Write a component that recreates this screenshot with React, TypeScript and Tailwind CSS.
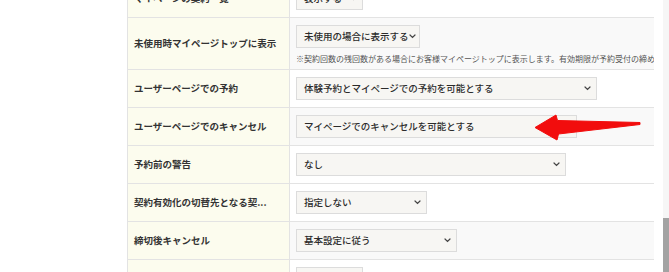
import React from "react";

type Row = {
  label: string;
  value: string;
  width: number;
  shade: boolean;
  chevron?: boolean;
  note?: string;
};

const rows: Row[] = [
  { label: "マイページの契約一覧", value: "表示する", width: 67, shade: false },
  {
    label: "未使用時マイページトップに表示",
    value: "未使用の場合に表示する",
    width: 124,
    shade: true,
    note: "※契約回数の残回数がある場合にお客様マイページトップに表示します。有効期限が予約受付の締め切りを過ぎた場合は表示しません。",
  },
  { label: "ユーザーページでの予約", value: "体験予約とマイページでの予約を可能とする", width: 301, shade: false },
  { label: "ユーザーページでのキャンセル", value: "マイページでのキャンセルを可能とする", width: 281, shade: true, chevron: false },
  { label: "予約前の警告", value: "なし", width: 270, shade: false },
  { label: "契約有効化の切替先となる契...", value: "指定しない", width: 131, shade: false },
  { label: "締切後キャンセル", value: "基本設定に従う", width: 161, shade: true },
  { label: "", value: "", width: 67, shade: false },
];

function Chevron() {
  return (
    <svg width="7" height="5" viewBox="0 0 7 5" className="shrink-0">
      <path d="M1 1l2.5 2.5L6 1" fill="none" stroke="#444" strokeWidth="1.2" strokeLinecap="round" />
    </svg>
  );
}

function Select({ value, width, chevron = true }: { value: string; width: number; chevron?: boolean }) {
  return (
    <div
      className="h-[23px] flex items-center justify-between pl-[7px] pr-[5px] bg-[#f7f6f3] border border-[#dcdcdc] text-[9.5px] font-medium text-[#2b2b2b] whitespace-nowrap"
      style={{ width }}
    >
      <span>{value}</span>
      {chevron && <Chevron />}
    </div>
  );
}

export default function App() {
  return (
    <div
      className="relative w-[669px] h-[272px] overflow-hidden bg-white flex"
      style={{ fontFamily: '"Noto Sans CJK JP", "Noto Sans", sans-serif' }}
    >
      <div className="w-[127px] shrink-0" />

      {/* Settings table */}
      <div className="w-[527px] shrink-0 -mt-[20px] border-l border-[#e3e3e3]">
        {rows.map((row, i) => (
          <div key={i} className="flex border-b border-[#e3e3e3]">
            <div className="w-[162px] shrink-0 bg-[#fcfcee] border-r border-[#e3e3e3] flex items-center pl-[6px] text-[9.5px] font-bold text-[#333] whitespace-nowrap">
              {row.label}
            </div>
            <div
              className={`flex-1 min-w-0 pl-[6px] ${row.note ? "pt-[7px] pb-[5px] h-[51px]" : "h-[37px] flex items-center"} ${row.shade ? "bg-[#f9f9f9]" : "bg-white"}`}
            >
              <Select value={row.value} width={row.width} chevron={row.chevron} />
              {row.note && (
                <p className="mt-[5px] text-[8px] text-[#555] whitespace-nowrap overflow-hidden">{row.note}</p>
              )}
            </div>
          </div>
        ))}
      </div>

      {/* Scrollbar */}
      <div className="w-[9px] shrink-0" />
      <div className="w-[6px] shrink-0 flex flex-col bg-[#f6f6f6]">
        <div className="h-[218px]" />
        <div className="flex-1 bg-[#a3a3a3]" />
      </div>

      {/* Annotation arrow */}
      <svg className="absolute left-0 top-0 pointer-events-none" width="669" height="272" viewBox="0 0 669 272">
        <polygon
          points="535,127.5 556,115 557.5,120.5 640,122.5 640,124.5 558.5,134 557,140"
          fill="#f20d0d"
          stroke="#f20d0d"
          strokeWidth="1"
          strokeLinejoin="round"
        />
      </svg>
    </div>
  );
}
